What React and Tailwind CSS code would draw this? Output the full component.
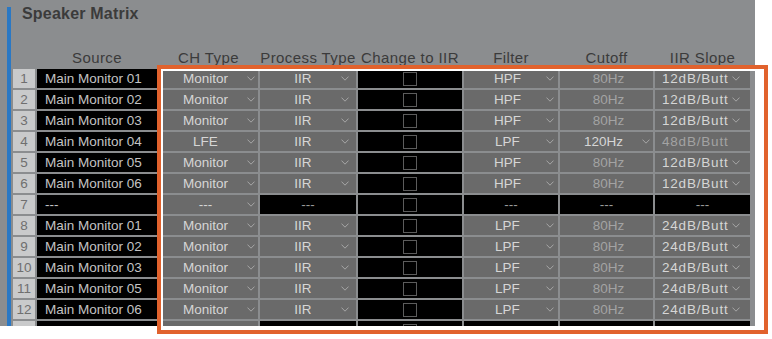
import React from 'react'

const cols = 'grid grid-cols-[22px_120px_99px_96px_104px_94px_93px_95px] gap-x-[2px]'

const rows = [
  { n: 1, src: 'Main Monitor 01', ch: 'Monitor', filter: 'HPF', cut: '80Hz', slope: '12dB/Butt' },
  { n: 2, src: 'Main Monitor 02', ch: 'Monitor', filter: 'HPF', cut: '80Hz', slope: '12dB/Butt' },
  { n: 3, src: 'Main Monitor 03', ch: 'Monitor', filter: 'HPF', cut: '80Hz', slope: '12dB/Butt' },
  { n: 4, src: 'Main Monitor 04', ch: 'LFE', filter: 'LPF', cut: '120Hz', slope: '48dB/Butt', lfe: true },
  { n: 5, src: 'Main Monitor 05', ch: 'Monitor', filter: 'HPF', cut: '80Hz', slope: '12dB/Butt' },
  { n: 6, src: 'Main Monitor 06', ch: 'Monitor', filter: 'HPF', cut: '80Hz', slope: '12dB/Butt' },
  { n: 7, empty: true },
  { n: 8, src: 'Main Monitor 01', ch: 'Monitor', filter: 'LPF', cut: '80Hz', slope: '24dB/Butt' },
  { n: 9, src: 'Main Monitor 02', ch: 'Monitor', filter: 'LPF', cut: '80Hz', slope: '24dB/Butt' },
  { n: 10, src: 'Main Monitor 03', ch: 'Monitor', filter: 'LPF', cut: '80Hz', slope: '24dB/Butt' },
  { n: 11, src: 'Main Monitor 05', ch: 'Monitor', filter: 'LPF', cut: '80Hz', slope: '24dB/Butt' },
  { n: 12, src: 'Main Monitor 06', ch: 'Monitor', filter: 'LPF', cut: '80Hz', slope: '24dB/Butt' },
  { n: 13, empty: true },
]

const headers = ['', 'Source', 'CH Type', 'Process Type', 'Change to IIR', 'Filter', 'Cutoff', 'IIR Slope']

function Chevron() {
  return (
    <svg width="8" height="5" viewBox="0 0 8 5" className="shrink-0">
      <polyline points="0.5,0.6 4,4.2 7.5,0.6" fill="none" stroke="#a6a6a6" strokeWidth="1" />
    </svg>
  )
}

function Select({ text, chev = true, dim = false, pr = 'pr-[4px]' }) {
  return (
    <div className={`flex items-center gap-[3px] bg-[#6a6a6a] pl-2 ${pr}`}>
      <span className={`flex-1 text-center ${dim ? 'text-[#a3a3a3]' : 'text-[#d6d6d6]'}`}>{text}</span>
      {chev && <Chevron />}
    </div>
  )
}

function Blank({ children }) {
  return (
    <div className="flex items-center justify-center bg-black text-[#9a9a9a]">{children}</div>
  )
}

function Check() {
  return (
    <div className="flex items-center justify-center bg-black">
      <div className="w-[14px] h-[14px] border border-[#5c5c5c]" />
    </div>
  )
}

function Row({ r }) {
  return (
    <div className={`${cols} h-[19px] text-[13.5px] leading-[19px]`}>
      <div className="bg-[#c9cacb] text-[#6f6f6f] text-center">{r.n}</div>
      <div className="bg-black text-[#c4c4c4] pl-[8px] whitespace-nowrap">{r.empty ? '---' : r.src}</div>
      {r.empty ? (
        <>
          <Select text="---" pr="pr-[3px]" />
          <Blank>---</Blank>
          <Check />
          <Blank>---</Blank>
          <Blank>---</Blank>
          <Blank>---</Blank>
        </>
      ) : (
        <>
          <Select text={r.ch} pr="pr-[3px]" />
          <Select text="IIR" pr="pr-[7px]" />
          <Check />
          <Select text={r.filter} />
          {r.lfe ? <Select text={r.cut} pr="pr-[3px]" /> : <Select text={r.cut} chev={false} dim />}
          <div className="flex items-center gap-[3px] bg-[#6a6a6a] pl-[7px] pr-[8px] tracking-[0.8px] whitespace-nowrap">
            <span className={r.lfe ? 'text-[#a3a3a3]' : 'text-[#d6d6d6]'}>{r.slope}</span>
            {!r.lfe && <Chevron />}
          </div>
        </>
      )}
    </div>
  )
}

export default function App() {
  return (
    <div className="relative w-[772px] h-[339px] bg-white font-['Liberation_Sans',Arial,sans-serif] overflow-hidden">
      <div className="w-[755px] h-[326px] bg-[#8b8d8f] overflow-hidden flex pl-[7px]">
        <div className="w-[4px] mt-[7px] bg-[#2a78c4] shrink-0" />
        <div className="ml-[2px] flex flex-col">
          <div className="pt-[4px] pl-[9px] h-[24px] text-[16px] leading-[20px] font-bold tracking-[0.2px] text-[#3b3b3b]">
            Speaker Matrix
          </div>
          <div className={`${cols} mt-[25px] h-[18px] text-[15px] leading-[18px] tracking-[0.4px] text-[#3b3b3b]`}>
            {headers.map((h, i) => (
              <div key={i} className="text-center whitespace-nowrap">{h}</div>
            ))}
          </div>
          <div className="mt-[2px] flex flex-col gap-y-[2px]">
            {rows.map((r) => (
              <Row key={r.n} r={r} />
            ))}
          </div>
        </div>
      </div>
      {/* highlight frame */}
      <div className="absolute left-[157px] top-[65px] w-[611px] h-[269px] border-4 border-[#e1622d] shadow-[inset_0_0_0_2px_#ffffff] pointer-events-none" />
    </div>
  )
}
